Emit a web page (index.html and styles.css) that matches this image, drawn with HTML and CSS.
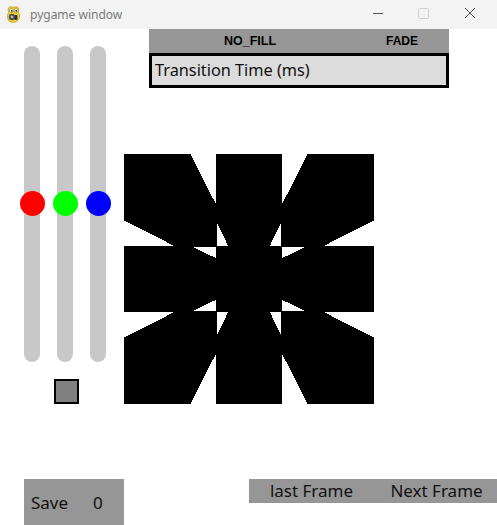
FILE: index.html
```html
<!DOCTYPE html>
<html>
<head>
<meta charset="utf-8">
<link rel="stylesheet" href="styles.css">
</head>
<body>
<div class="window">
  <div class="titlebar">
    <svg class="app-icon" width="16" height="18" viewBox="0 0 16 18">
      <path d="M3 6 C1 3 3 0 6 1 C7 1.5 8 1.5 9 1 C12 0 14 3 12 6 C14 8 14 12 12 14 C10 17 5 17 3 15 C1 13 1 8 3 6 Z" fill="#f2d43a" stroke="#b89a1a" stroke-width="0.8"/>
      <circle cx="5.5" cy="4.5" r="2" fill="#fff" stroke="#8a7414" stroke-width="0.6"/>
      <circle cx="10" cy="4.5" r="2" fill="#fff" stroke="#8a7414" stroke-width="0.6"/>
      <circle cx="5.8" cy="4.8" r="0.9" fill="#222"/>
      <circle cx="10.2" cy="4.8" r="0.9" fill="#222"/>
      <circle cx="6" cy="11" r="3.2" fill="#4a4a4a"/>
      <circle cx="6" cy="11" r="1.4" fill="#bbb"/>
      <rect x="8.5" y="9" width="3" height="5" rx="1" fill="#333"/>
    </svg>
    <span class="title">pygame window</span>
    <div class="controls">
      <svg class="ctl" width="46" height="29" viewBox="0 0 46 29"><line x1="17" y1="13.5" x2="27" y2="13.5" stroke="#5a5a5a" stroke-width="1"/></svg>
      <svg class="ctl" width="46" height="29" viewBox="0 0 46 29"><rect x="16.5" y="8.5" width="10" height="10" rx="1" fill="none" stroke="#cfcfcf" stroke-width="1"/></svg>
      <svg class="ctl" width="46" height="29" viewBox="0 0 46 29"><path d="M17 8 L27 18 M27 8 L17 18" stroke="#5a5a5a" stroke-width="1"/></svg>
    </div>
  </div>
  <div class="surface">
    <div class="main">
      <div class="left-col">
        <div class="sliders">
          <div class="track"><span class="knob knob-red"></span></div>
          <div class="track"><span class="knob knob-green"></span></div>
          <div class="track"><span class="knob knob-blue"></span></div>
        </div>
        <div class="swatch"></div>
      </div>
      <div class="right-col">
        <div class="mode-bar">
          <span class="mode mode-fill">NO_FILL</span>
          <span class="mode mode-fade">FADE</span>
        </div>
        <div class="text-box">Transition Time (ms)</div>
        <svg class="shape" width="250" height="250" viewBox="0 0 250 250" shape-rendering="crispEdges">
          <g fill="#000" stroke="#000" stroke-width="1.5" stroke-linejoin="round">
            <polygon points="1,1 66,1 92,52 92,92 52,92 1,66"/>
            <polygon points="93,1 157,1 157,67 145,92 105,92 93,67"/>
            <polygon points="249,1 184,1 158,52 158,92 198,92 249,66"/>
            <polygon points="1,93 67,93 92,105 92,145 67,157 1,157"/>
            <polygon points="93,93 157,93 157,157 93,157"/>
            <polygon points="249,93 183,93 158,105 158,145 183,157 249,157"/>
            <polygon points="1,249 66,249 92,198 92,158 52,158 1,184"/>
            <polygon points="93,249 157,249 157,183 145,158 105,158 93,183"/>
            <polygon points="249,249 184,249 158,198 158,158 198,158 249,184"/>
          </g>
        </svg>
      </div>
    </div>
    <div class="bottom">
      <div class="save-btn"><span class="save-label">Save</span><span class="save-count">0</span></div>
      <div class="frame-bar">
        <span class="frame-btn">last Frame</span>
        <span class="frame-btn">Next Frame</span>
      </div>
    </div>
  </div>
</div>
</body>
</html>
```
FILE: styles.css
```css
html, body {
  margin: 0;
  padding: 0;
  background: #ffffff;
}

.window {
  width: 497px;
  height: 525px;
  overflow: hidden;
  display: flex;
  flex-direction: column;
  font-family: "Noto Sans", "Open Sans", sans-serif;
}

.titlebar {
  height: 29px;
  flex: 0 0 29px;
  background: #f3f3f3;
  display: flex;
  align-items: center;
}

.app-icon {
  margin-left: 6px;
  margin-top: 1px;
}

.title {
  margin-left: 8px;
  font-size: 12px;
  color: #7a7a7a;
}

.controls {
  margin-left: auto;
  display: flex;
  margin-right: 3px;
}

.ctl {
  display: block;
}

.surface {
  flex: 1;
  background: #ffffff;
  display: flex;
  flex-direction: column;
}

.main {
  display: flex;
  align-items: flex-start;
}

.left-col {
  padding-left: 24px;
  padding-top: 17px;
  display: flex;
  flex-direction: column;
}

.sliders {
  display: flex;
  gap: 17px;
}

.track {
  position: relative;
  width: 16px;
  height: 316px;
  border-radius: 8px;
  background: #c8c8c8;
}

.knob {
  position: absolute;
  left: -4.5px;
  top: 145px;
  width: 25px;
  height: 25px;
  border-radius: 50%;
}

.knob-red { background: #ff0000; }
.knob-green { background: #00ff00; }
.knob-blue { background: #0000ff; }

.swatch {
  margin-top: 17px;
  margin-left: 30px;
  width: 25px;
  height: 25px;
  box-sizing: border-box;
  border: 2px solid #000;
  background: #808080;
}

.right-col {
  margin-left: 18px;
  display: flex;
  flex-direction: column;
}

.mode-bar {
  margin-left: 25px;
  width: 300px;
  height: 24px;
  background: #969696;
  display: grid;
  grid-template-columns: 202px 98px;
  align-items: center;
  font-family: "Liberation Sans", Arial, sans-serif;
  font-weight: bold;
  font-size: 12.5px;
  color: #000;
}

.mode {
  text-align: center;
}

.mode-fade {
  padding-left: 4px;
  font-size: 12px;
}

.text-box {
  margin-left: 25px;
  width: 300px;
  height: 35px;
  box-sizing: border-box;
  border: 3px solid #000;
  background: #dcdcdc;
  padding-left: 3px;
  font-size: 16.3px;
  line-height: 29px;
  color: #111;
}

.shape {
  display: block;
  margin-top: 66px;
}

.bottom {
  margin-top: 75px;
  display: flex;
  align-items: flex-start;
}

.save-btn {
  flex: 0 0 100px;
  margin-left: 24px;
  width: 100px;
  height: 46px;
  background: #969696;
  display: flex;
  align-items: center;
  font-size: 17px;
  color: #111;
}

.save-label {
  margin-left: 7px;
}

.save-count {
  margin-left: 25px;
}

.frame-bar {
  margin-left: 125px;
  flex: 0 0 250px;
  width: 250px;
  height: 24px;
  background: #969696;
  display: grid;
  grid-template-columns: 125px 125px;
  align-items: center;
  font-size: 17px;
  line-height: 24px;
  color: #111;
}

.frame-btn {
  text-align: center;
}
```
